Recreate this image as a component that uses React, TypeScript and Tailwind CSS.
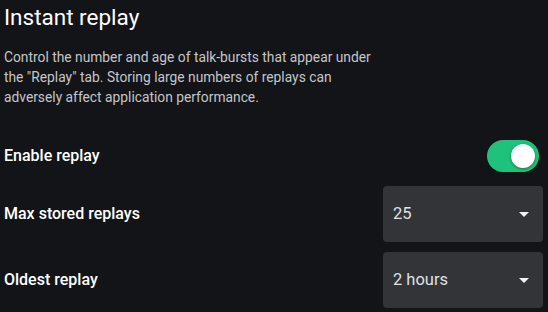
function Toggle({ on }: { on: boolean }) {
  return (
    <div className={`relative h-[32px] w-[52px] rounded-full ${on ? "bg-[#1fc27a]" : "bg-[#555]"}`}>
      <div className="absolute right-[4px] top-[4px] h-[24px] w-[24px] rounded-full bg-white shadow-[0_1px_3px_rgba(0,0,0,0.4)]" />
    </div>
  )
}

function Select({ value }: { value: string }) {
  return (
    <div className="flex h-[56px] w-[160px] items-center justify-between rounded-[4px] bg-[#333437] pl-[10px] pr-[14px]">
      <span className="text-[16.5px] text-[#dfe2e6]">{value}</span>
      <svg width="10" height="5" viewBox="0 0 10 5">
        <path d="M0 0 L10 0 L5 5 Z" fill="#f2f2f2" />
      </svg>
    </div>
  )
}

export default function App() {
  return (
    <main className="min-h-[312px] w-[548px] bg-[#131417] px-[4px] pt-[3px] font-['Roboto',sans-serif] text-white">
      <h1 className="text-[22.5px] leading-[28px]">Instant replay</h1>
      <p className="mt-[16px] max-w-[380px] text-[13.8px] leading-[20px] text-[#c4c6ca]">
        Control the number and age of talk-bursts that appear under the "Replay" tab. Storing large numbers of replays can
        adversely affect application performance.
      </p>

      <div className="mt-[33px] flex items-center justify-between pr-[5px]">
        <span className="text-[16px] font-medium">Enable replay</span>
        <Toggle on />
      </div>

      <div className="mt-[14px] flex items-center justify-between pr-[1px]">
        <span className="text-[16px] font-medium">Max stored replays</span>
        <Select value="25" />
      </div>

      <div className="mt-[10px] flex items-center justify-between pr-[1px]">
        <span className="text-[16px] font-medium">Oldest replay</span>
        <Select value="2 hours" />
      </div>
    </main>
  )
}
